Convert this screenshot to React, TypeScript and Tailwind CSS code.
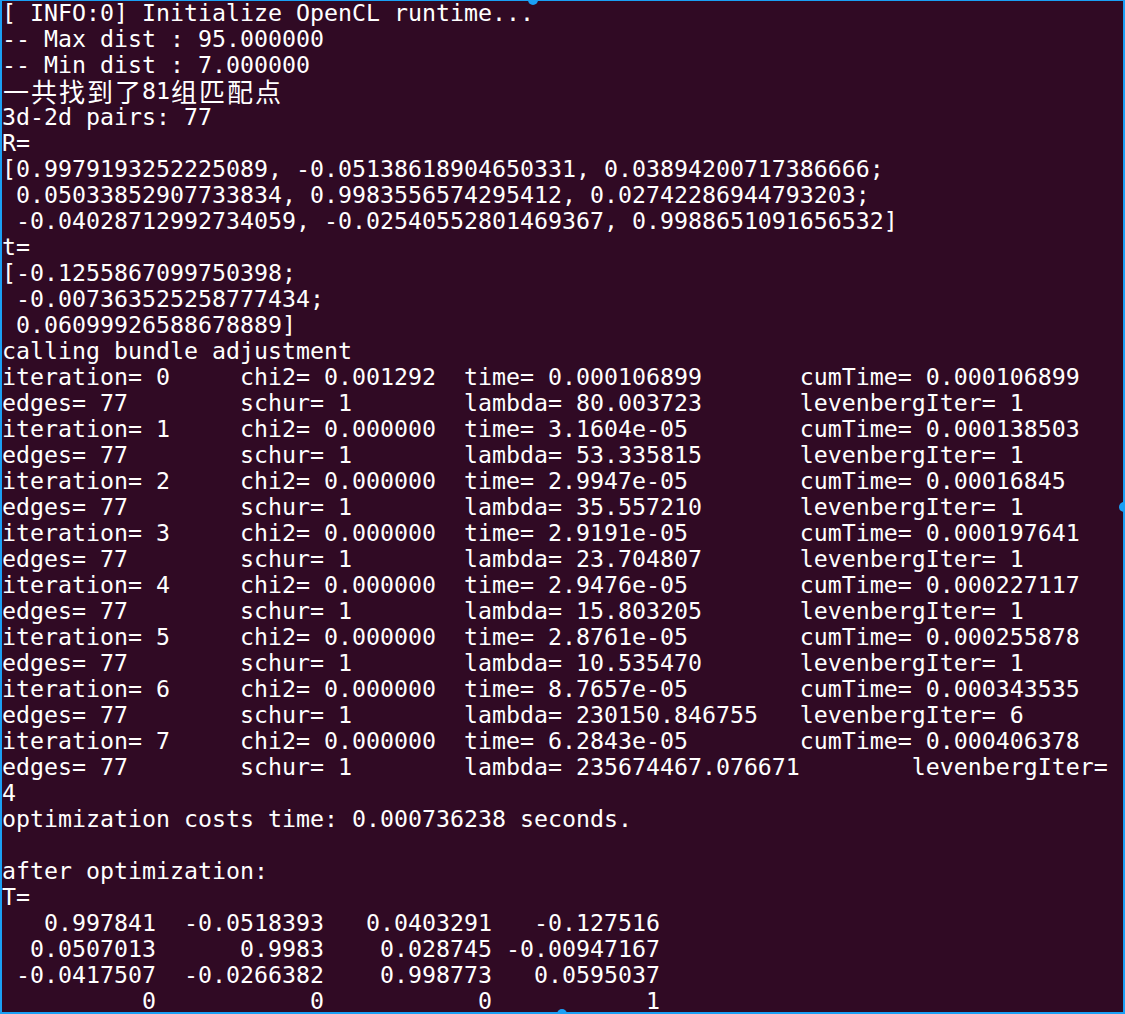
import React from "react";

const expandTabs = (s: string) => {
  let out = "";
  for (const ch of s) {
    if (ch === "\t") {
      const n = 8 - (out.length % 8);
      out += " ".repeat(n);
    } else out += ch;
  }
  return out;
};

const rpad = (s: string, n: number) => " ".repeat(Math.max(0, n - s.length)) + s;

const iters: [string, string, string, string, string, string][] = [
  ["0", "0.001292", "0.000106899", "0.000106899", "80.003723", "1"],
  ["1", "0.000000", "3.1604e-05", "0.000138503", "53.335815", "1"],
  ["2", "0.000000", "2.9947e-05", "0.00016845", "35.557210", "1"],
  ["3", "0.000000", "2.9191e-05", "0.000197641", "23.704807", "1"],
  ["4", "0.000000", "2.9476e-05", "0.000227117", "15.803205", "1"],
  ["5", "0.000000", "2.8761e-05", "0.000255878", "10.535470", "1"],
  ["6", "0.000000", "8.7657e-05", "0.000343535", "230150.846755", "6"],
  ["7", "0.000000", "6.2843e-05", "0.000406378", "235674467.076671", "4"],
];

const tRows = [
  ["0.997841", "-0.0518393", "0.0403291", "-0.127516"],
  ["0.0507013", "0.9983", "0.028745", "-0.00947167"],
  ["-0.0417507", "-0.0266382", "0.998773", "0.0595037"],
  ["0", "0", "0", "1"],
];

function buildLines(): string[] {
  const L: string[] = [];
  L.push("[ INFO:0] Initialize OpenCL runtime...");
  L.push("-- Max dist : 95.000000");
  L.push("-- Min dist : 7.000000");
  L.push("__CJK__");
  L.push("3d-2d pairs: 77");
  L.push("R=");
  L.push("[0.9979193252225089, -0.05138618904650331, 0.03894200717386666;");
  L.push(" 0.05033852907733834, 0.9983556574295412, 0.02742286944793203;");
  L.push(" -0.04028712992734059, -0.02540552801469367, 0.9988651091656532]");
  L.push("t=");
  L.push("[-0.1255867099750398;");
  L.push(" -0.007363525258777434;");
  L.push(" 0.06099926588678889]");
  L.push("calling bundle adjustment");
  iters.forEach(([i, chi, time, cum, lambda, lev], idx) => {
    L.push(expandTabs(`iteration= ${i}\t chi2= ${chi}\t time= ${time}\t cumTime= ${cum}`));
    if (idx === iters.length - 1) {
      L.push(expandTabs(`edges= 77\t schur= 1\t lambda= ${lambda}\t levenbergIter=`));
      L.push(lev);
    } else {
      L.push(expandTabs(`edges= 77\t schur= 1\t lambda= ${lambda}\t levenbergIter= ${lev}`));
    }
  });
  L.push("optimization costs time: 0.000736238 seconds.");
  L.push("");
  L.push("after optimization:");
  L.push("T=");
  tRows.forEach((r) => L.push(r.map((v) => rpad(v, 11)).join(" ")));
  return L;
}

const CJK = ({ c }: { c: string }) => (
  <span
    className="inline-block w-[28px] text-center text-[26px] leading-[26px] align-top"
    style={{ fontFamily: '"Noto Sans CJK SC", sans-serif' }}
  >
    {c}
  </span>
);

export default function App() {
  const lines = buildLines();
  return (
    <div className="relative w-[1125px] h-[1014px] overflow-hidden bg-[#300a24] shadow-[inset_2px_1px_0_#1aa0f5,inset_-2px_-2px_0_#1aa0f5]">
      <div
        className="pl-[2px] text-white text-[23.25px] leading-[26px] whitespace-pre"
        style={{ fontFamily: '"DejaVu Sans Mono", monospace' }}
      >
        {lines.map((l, i) =>
          l === "__CJK__" ? (
            <div key={i} className="h-[26px]">
              {"一共找到了".split("").map((c, k) => (
                <CJK key={"a" + k} c={c} />
              ))}
              <span className="align-top">81</span>
              {"组匹配点".split("").map((c, k) => (
                <CJK key={"b" + k} c={c} />
              ))}
            </div>
          ) : (
            <div key={i} className="h-[26px]">
              {l || " "}
            </div>
          )
        )}
      </div>
      <span className="absolute left-[528px] top-[-5px] w-[10px] h-[10px] rounded-full bg-[#1aa0f5]" />
      <span className="absolute left-[1119px] top-[502px] w-[10px] h-[10px] rounded-full bg-[#1aa0f5]" />
      <span className="absolute left-[557px] top-[1009px] w-[10px] h-[10px] rounded-full bg-[#1aa0f5]" />
    </div>
  );
}
